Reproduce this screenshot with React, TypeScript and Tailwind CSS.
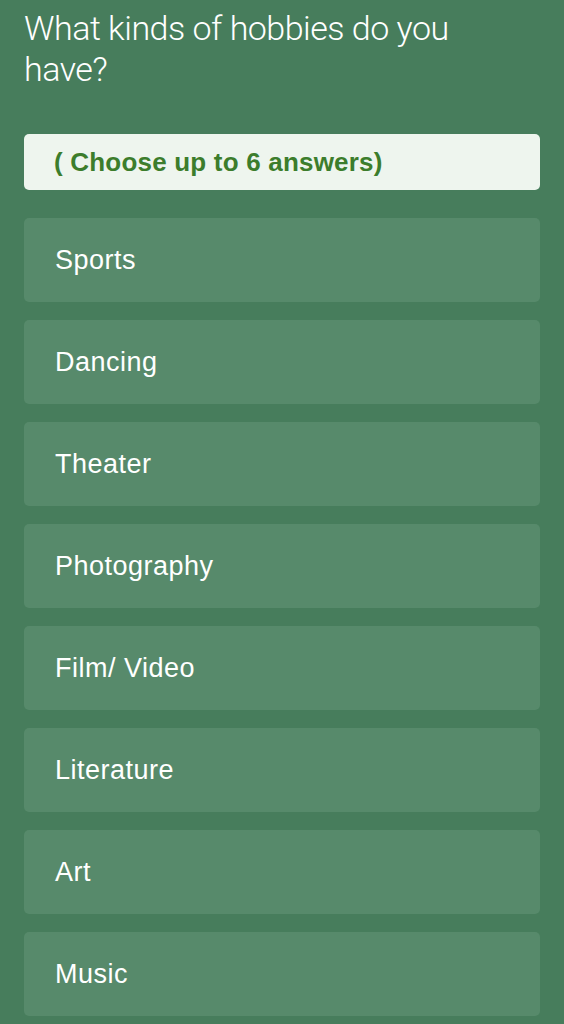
export default function App() {
  const items = ["Sports", "Dancing", "Theater", "Photography", "Film/ Video", "Literature", "Art", "Music"];
  return (
    <div className="min-h-[1024px] w-full bg-[#477d5c] px-6 pt-[8px] pb-6" style={{ fontFamily: "'Liberation Sans', Arial, sans-serif" }}>
      <h1 className="text-[34px] leading-[41px] text-white tracking-[-0.5px] pr-6" style={{ fontFamily: "Roboto, 'Liberation Sans', sans-serif", fontWeight: 300 }}>
        What kinds of hobbies do you have?
      </h1>
      <div className="mt-[44px] h-14 rounded-[5px] bg-[#eef5ee] flex items-center pl-[30px]">
        <span className="text-[26px] font-bold text-[#3c7d2c] tracking-[0.2px]">( Choose up to 6 answers)</span>
      </div>
      <div className="mt-7 flex flex-col gap-[18px]">
        {items.map((t) => (
          <div key={t} className="h-[84px] rounded-[5px] bg-[#578a6b] flex items-center pl-[31px]">
            <span className="text-[27px] text-white tracking-[0.5px]">{t}</span>
          </div>
        ))}
      </div>
    </div>
  );
}
